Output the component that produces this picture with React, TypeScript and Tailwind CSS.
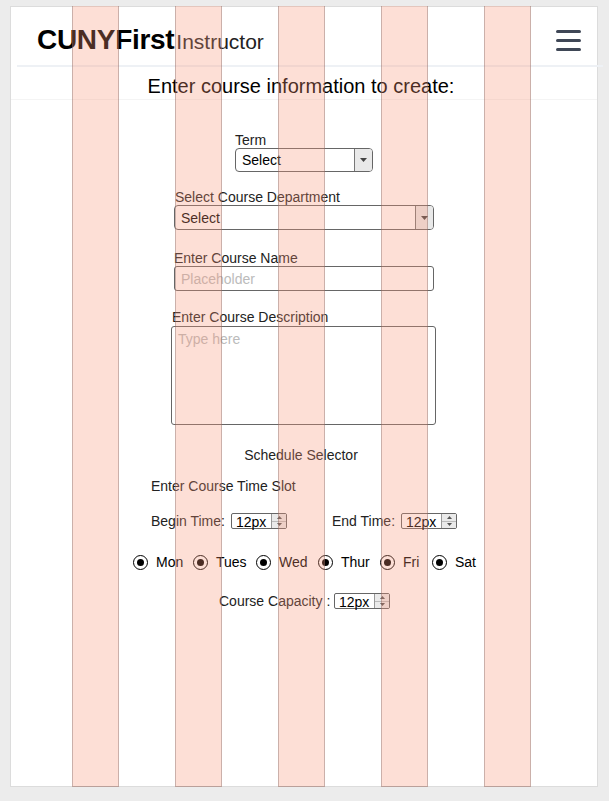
import React from "react";

const font = { fontFamily: '"Liberation Sans", Arial, sans-serif' };

function Caret() {
  return (
    <span className="flex h-full w-[18px] items-center justify-center border-l border-[#777] bg-[#e9e9e9]">
      <svg width="7" height="4" viewBox="0 0 7 4">
        <path d="M0 0h7L3.5 4z" fill="#444" />
      </svg>
    </span>
  );
}

function Spinner({ value }: { value: string }) {
  return (
    <span className="inline-flex h-[16px] items-stretch rounded-[2px] border border-[#666] bg-white text-[14px] leading-[14px] text-black">
      <span className="w-[39px] pl-[4px] pt-[1px]">{value}</span>
      <span className="flex w-[15px] flex-col border-l border-[#999] bg-[#eaeaea]">
        <span className="flex flex-1 items-center justify-center border-b border-[#bbb]">
          <svg width="5" height="3" viewBox="0 0 5 3">
            <path d="M0 3h5L2.5 0z" fill="#555" />
          </svg>
        </span>
        <span className="flex flex-1 items-center justify-center">
          <svg width="5" height="3" viewBox="0 0 5 3">
            <path d="M0 0h5L2.5 3z" fill="#555" />
          </svg>
        </span>
      </span>
    </span>
  );
}

function Radio({ label, gap }: { label: string; gap: string }) {
  return (
    <span className={`flex shrink-0 items-center ${gap}`}>
      <span className="flex h-[15px] w-[15px] shrink-0 items-center justify-center rounded-full border-[1.5px] border-black">
        <span className="h-[7px] w-[7px] rounded-full bg-black" />
      </span>
      <span className="ml-[8px] text-[14px] text-black">{label}</span>
    </span>
  );
}

const days = [
  { label: "Mon", gap: "w-[60px]" },
  { label: "Tues", gap: "w-[63px]" },
  { label: "Wed", gap: "w-[62px]" },
  { label: "Thur", gap: "w-[62px]" },
  { label: "Fri", gap: "w-[52px]" },
  { label: "Sat", gap: "w-[50px]" },
];

export default function App() {
  return (
    <div className="min-h-[801px] bg-[#ececec] pt-[6px]" style={font}>
      <div className="relative ml-[10px] h-[781px] w-[588px] border border-[#dcdcdc] bg-white text-[#222]">
        {/* Header */}
        <div className="ml-[6px] flex h-[60px] w-[586px] items-center justify-between border-b-2 border-[#eef1f5] pl-[20px] pr-[20px]">
          <div className="flex items-baseline pt-[8px]">
            <span className="text-[28px] font-bold tracking-[-0.3px] text-black">CUNYFirst</span>
            <span className="ml-[2px] text-[21px] text-[#222]">Instructor</span>
          </div>
          <div className="flex flex-col gap-[6px] pr-[2px] pt-[9px]">
            <span className="h-[3px] w-[25px] rounded-sm bg-[#3f4756]" />
            <span className="h-[3px] w-[25px] rounded-sm bg-[#3f4756]" />
            <span className="h-[3px] w-[25px] rounded-sm bg-[#3f4756]" />
          </div>
        </div>
        <div className="border-b border-[#f4f4f4] pb-[3px] pr-[6px] pt-[9px] text-center text-[20px] leading-[20px] text-black">
          Enter course information to create:
        </div>

        {/* Form */}
        <div className="flex flex-col text-[14px] leading-[16px]">
          <label className="ml-[224px] mt-[32px]">Term</label>
          <div className="ml-[224px] flex h-[24px] w-[138px] items-center overflow-hidden rounded-[4px] border border-[#666]">
            <span className="flex-1 pl-[6px] text-black">Select</span>
            <Caret />
          </div>

          <label className="ml-[164px] mt-[17px]">Select Course Department</label>
          <div className="ml-[163px] flex h-[25px] w-[260px] items-center overflow-hidden rounded-[4px] border border-[#666]">
            <span className="flex-1 pl-[6px] text-black">Select</span>
            <Caret />
          </div>

          <label className="ml-[163px] mt-[20px]">Enter Course Name</label>
          <div className="ml-[163px] flex h-[25px] w-[260px] items-center rounded-[3px] border border-[#666] pl-[6px] text-[#bbb]">
            Placeholder
          </div>

          <label className="ml-[161px] mt-[18px]">Enter Course Description</label>
          <div className="ml-[160px] mt-[1px] h-[99px] w-[265px] rounded-[3px] border border-[#666] pl-[6px] pt-[4px] text-[#bbb]">
            Type here
          </div>

          <div className="mt-[22px] pr-[6px] text-center">Schedule Selector</div>
          <div className="ml-[140px] mt-[15px]">Enter Course Time Slot</div>

          <div className="ml-[140px] mt-[19px] flex items-center">
            <span className="w-[80px]">Begin Time:</span>
            <Spinner value="12px" />
            <span className="ml-[45px] w-[69px]">End Time:</span>
            <Spinner value="12px" />
          </div>

          <div className="ml-[122px] mt-[25px] flex items-center">
            {days.map((d) => (
              <Radio key={d.label} label={d.label} gap={d.gap} />
            ))}
          </div>

          <div className="ml-[208px] mt-[23px] flex items-center">
            <span className="w-[115px]">Course Capacity :</span>
            <Spinner value="12px" />
          </div>
        </div>

        {/* Column overlay */}
        <div className="pointer-events-none absolute inset-y-[-1px] left-[61px] flex gap-[56px]">
          {[0, 1, 2, 3, 4].map((i) => (
            <div
              key={i}
              className="w-[47px] border-x border-b border-[rgba(110,90,90,0.35)] bg-[rgba(248,150,120,0.3)]"
            />
          ))}
        </div>
      </div>
    </div>
  );
}
